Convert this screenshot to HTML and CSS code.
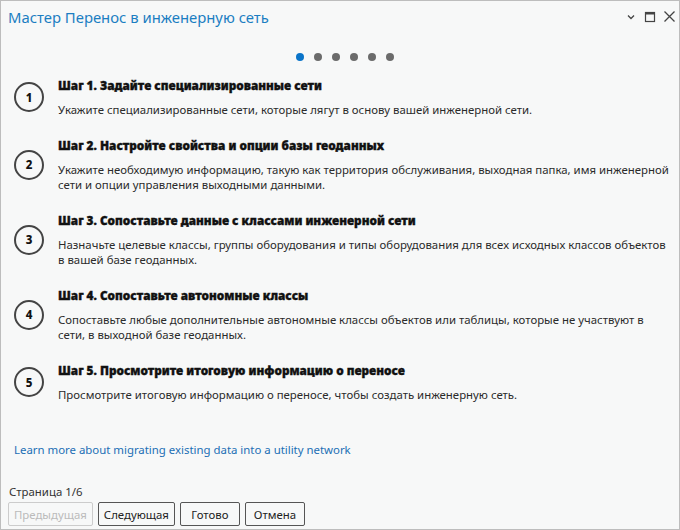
FILE: index.html
```html
<!DOCTYPE html>
<html lang="ru">
<head>
<meta charset="utf-8">
<link rel="stylesheet" href="styles.css">
</head>
<body>
<div class="window">
  <header class="titlebar">
    <h1 class="title">Мастер Перенос в инженерную сеть</h1>
    <div class="controls">
      <svg class="ctl" width="12" height="12" viewBox="0 0 12 12"><path d="M3 4.5 L6 7.5 L9 4.5" fill="none" stroke="#444" stroke-width="1.3"/></svg>
      <svg class="ctl" width="12" height="12" viewBox="0 0 12 12"><rect x="1.5" y="1.5" width="9" height="9" fill="none" stroke="#444" stroke-width="1.2"/><rect x="1.5" y="1.5" width="9" height="2" fill="#444"/></svg>
      <svg class="ctl" width="13" height="13" viewBox="0 0 13 13"><path d="M1.5 1.5 L11.5 11.5 M11.5 1.5 L1.5 11.5" stroke="#444" stroke-width="1.3"/></svg>
    </div>
  </header>
  <div class="dots">
    <span class="dot active"></span><span class="dot"></span><span class="dot"></span><span class="dot"></span><span class="dot"></span><span class="dot"></span>
  </div>
  <ol class="steps">
    <li class="step">
      <div class="num">1</div>
      <div class="body">
        <div class="heading">Шаг 1. Задайте специализированные сети</div>
        <p class="desc">Укажите специализированные сети, которые лягут в основу вашей инженерной сети.</p>
      </div>
    </li>
    <li class="step">
      <div class="num">2</div>
      <div class="body">
        <div class="heading">Шаг 2. Настройте свойства и опции базы геоданных</div>
        <p class="desc">Укажите необходимую информацию, такую как территория обслуживания, выходная папка, имя инженерной сети и опции управления выходными данными.</p>
      </div>
    </li>
    <li class="step">
      <div class="num">3</div>
      <div class="body">
        <div class="heading">Шаг 3. Сопоставьте данные с классами инженерной сети</div>
        <p class="desc">Назначьте целевые классы, группы оборудования и типы оборудования для всех исходных классов объектов в вашей базе геоданных.</p>
      </div>
    </li>
    <li class="step">
      <div class="num">4</div>
      <div class="body">
        <div class="heading">Шаг 4. Сопоставьте автономные классы</div>
        <p class="desc">Сопоставьте любые дополнительные автономные классы объектов или таблицы, которые не участвуют в сети, в выходной базе геоданных.</p>
      </div>
    </li>
    <li class="step">
      <div class="num">5</div>
      <div class="body">
        <div class="heading">Шаг 5. Просмотрите итоговую информацию о переносе</div>
        <p class="desc">Просмотрите итоговую информацию о переносе, чтобы создать инженерную сеть.</p>
      </div>
    </li>
  </ol>
  <a class="link" href="#">Learn more about migrating existing data into a utility network</a>
  <footer class="footer">
    <div class="page">Страница 1/6</div>
    <div class="buttons">
      <button class="btn" disabled>Предыдущая</button>
      <button class="btn">Следующая</button>
      <button class="btn">Готово</button>
      <button class="btn">Отмена</button>
    </div>
  </footer>
</div>
</body>
</html>
```

FILE: styles.css
```css
* { box-sizing: border-box; }
html, body { margin: 0; padding: 0; }
body {
  width: 680px;
  height: 530px;
  font-family: "Noto Sans", "Open Sans", sans-serif;
  color: #222;
  background: #f7f8f8;
}
.window {
  width: 680px;
  height: 530px;
  border: 1px solid #bdbdbd;
  background: #f7f8f8;
  display: flex;
  flex-direction: column;
  padding: 0 0 0 7px;
}
.titlebar {
  display: flex;
  align-items: center;
  justify-content: space-between;
  height: 31px;
  padding-right: 3px;
}
.title {
  margin: 0;
  font-weight: normal;
  font-size: 14.85px;
  color: #1b7ec2;
}
.controls { display: flex; gap: 7px; align-items: center; }
.ctl { display: block; }
.dots {
  display: flex;
  justify-content: center;
  gap: 10px;
  margin-top: 21px;
  padding-left: 2px;
}
.dot {
  width: 8px; height: 8px; border-radius: 50%;
  background: #6b6b6b;
}
.dot.active { background: #0a74c9; }
.steps {
  list-style: none;
  margin: 16px 0 0 0;
  padding: 0;
  display: flex;
  flex-direction: column;
  gap: 20px;
}
.step {
  display: flex;
  align-items: center;
  gap: 14px;
}
.num {
  flex: none;
  width: 30px; height: 30px;
  margin-left: 6px;
  border: 2px solid #444;
  border-radius: 50%;
  display: flex; align-items: center; justify-content: center;
  font-weight: 800;
  font-size: 11.5px;
  color: #111;
}
.body { flex: 1; padding-right: 7px; }
.heading {
  font-weight: 900;
  font-size: 11.8px;
  color: #111;
  line-height: 16px;
  -webkit-text-stroke: 0.35px #111;
}
.desc {
  margin: 9px 0 0 0;
  font-size: 11.4px;
  line-height: 15px;
  color: #2b2b2b;
}
.link {
  margin: 40px 0 0 6px;
  font-size: 11.4px;
  color: #1b6fb5;
  text-decoration: none;
}
.footer { margin-top: auto; padding-bottom: 3px; }
.page { font-size: 11.4px; color: #333; margin-left: 1px; margin-bottom: 3px; }
.buttons { display: flex; gap: 5px; }
.btn {
  font-family: inherit;
  font-size: 11.4px;
  height: 24px;
  min-width: 60px;
  padding: 0 5px;
  border: 1px solid #555;
  border-radius: 2px;
  background: #f7f8f8;
  color: #222;
}
.btn[disabled] { color: #bbb; border-color: #ccc; }
```
